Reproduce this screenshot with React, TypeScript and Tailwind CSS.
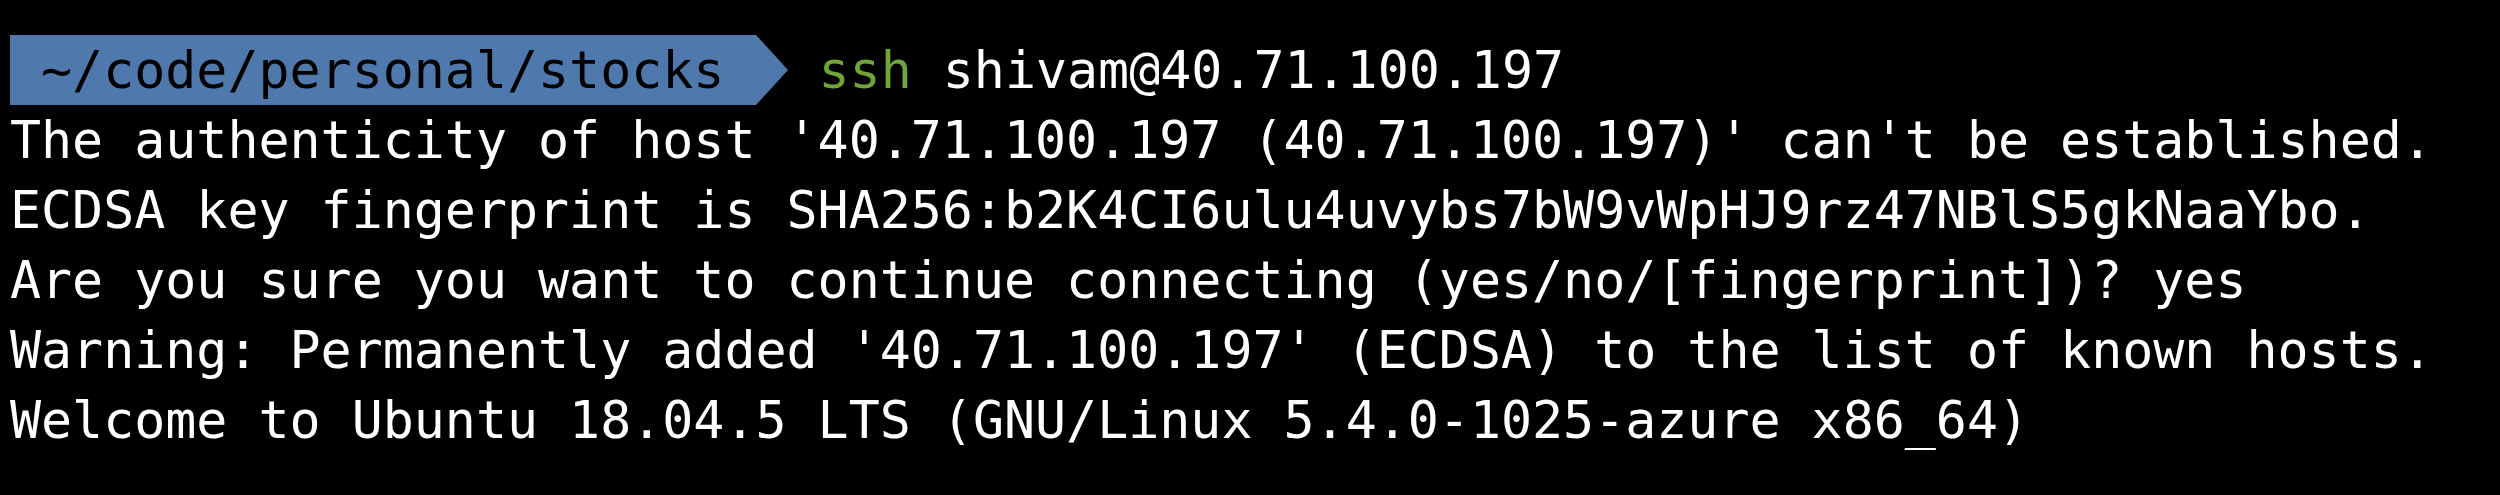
import React from "react";

const lines = [
  "The authenticity of host '40.71.100.197 (40.71.100.197)' can't be established.",
  "ECDSA key fingerprint is SHA256:b2K4CI6ulu4uvybs7bW9vWpHJ9rz47NBlS5gkNaaYbo.",
  "Are you sure you want to continue connecting (yes/no/[fingerprint])? yes",
  "Warning: Permanently added '40.71.100.197' (ECDSA) to the list of known hosts.",
  "Welcome to Ubuntu 18.04.5 LTS (GNU/Linux 5.4.0-1025-azure x86_64)",
];

export default function App() {
  return (
    <div
      className="w-[2500px] h-[495px] bg-black text-white pt-[35px] pl-[10px] overflow-hidden text-[51.6px] leading-[70px]"
      style={{ fontFamily: '"DejaVu Sans Mono", "Liberation Mono", monospace' }}
    >
      <div className="flex items-center h-[70px] whitespace-pre">
        <span className="bg-[#4f79ad] text-black h-[70px]">{" ~/code/personal/stocks "}</span>
        <svg width="32" height="70" viewBox="0 0 32 70" className="block shrink-0">
          <polygon points="0,0 32,35 0,70" fill="#4f79ad" />
        </svg>
        <span className="text-[#6fa63a]">{" ssh"}</span>
        <span>{" shivam@40.71.100.197"}</span>
      </div>
      {lines.map((l, i) => (
        <div key={i} className="h-[70px] whitespace-pre">
          {l}
        </div>
      ))}
    </div>
  );
}
